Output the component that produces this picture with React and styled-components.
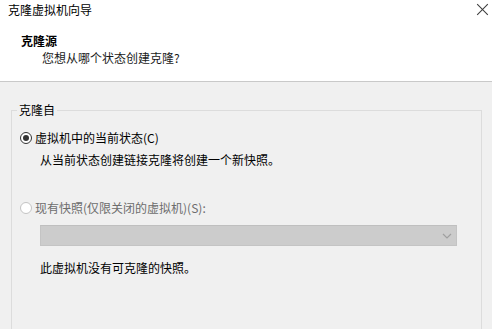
import React from "react";
import styled, { createGlobalStyle } from "styled-components";

const Global = createGlobalStyle`
  html, body { margin: 0; padding: 0; background: #f0f0f0; overflow: hidden; }
  body {
    font-family: "Microsoft YaHei UI", "Noto Sans CJK SC", "Noto Sans", sans-serif;
    font-size: 12px;
    color: #000;
  }
  * { box-sizing: border-box; }
`;

const Page = styled.div`
  width: 492px;
  height: 329px;
  overflow: hidden;
  display: flex;
  flex-direction: column;
`;

const Header = styled.div`
  flex: none;
  height: 82px;
  background: #fff;
  border-bottom: 1px solid #c9c9c9;
  display: flex;
  flex-direction: column;
`;

const TitleBar = styled.div`
  display: flex;
  align-items: flex-start;
  justify-content: space-between;
  padding: 2px 3px 0 8px;
  height: 18px;
`;

const TitleText = styled.div`
  line-height: 16px;
  color: #000;
`;

const CloseBtn = styled.span`
  display: block;
  width: 13px;
  height: 13px;
  margin-top: 1px;
  flex: none;
  position: relative;
  &::before, &::after {
    content: "";
    position: absolute;
    left: -1px;
    top: 6px;
    width: 15px;
    height: 1px;
    background: #3a3a3a;
  }
  &::before { transform: rotate(45deg); }
  &::after { transform: rotate(-45deg); }
`;

const HeadTitle = styled.div`
  margin: 15px 0 0 21px;
  line-height: 16px;
  font-weight: bold;
`;

const HeadSub = styled.div`
  margin: 1px 0 0 42px;
  line-height: 16px;
  color: #1a1a1a;
`;

const Body = styled.div`
  padding: 20px 0 0 11px;
  width: 482px;
`;

const Group = styled.fieldset`
  margin: 0;
  border: 1px solid #dcdcdc;
  padding: 0 0 40px 8px;
  min-inline-size: 0;
  height: 260px;
`;

const Legend = styled.legend`
  padding: 0 2px;
  margin-left: -3px;
  line-height: 16px;
`;

const Column = styled.div`
  display: flex;
  flex-direction: column;
`;

const RadioRow = styled.label`
  display: flex;
  align-items: center;
  gap: 3px;
  height: 16px;
  line-height: 16px;
  margin-top: ${(p) => p.$mt}px;
  color: ${(p) => (p.$disabled ? "#6d6d6d" : "#000")};
`;

const RadioCircle = styled.span`
  width: 12px;
  height: 12px;
  border-radius: 50%;
  border: 1px solid ${(p) => (p.$disabled ? "#c4c4c4" : "#333")};
  background: #fff;
  display: flex;
  align-items: center;
  justify-content: center;
  &::after {
    content: "";
    display: ${(p) => (p.$checked ? "block" : "none")};
    width: 6px;
    height: 6px;
    border-radius: 50%;
    background: #333;
  }
`;

const Note = styled.div`
  margin: ${(p) => p.$mt}px 0 0 20px;
  line-height: 16px;
`;

const Combo = styled.div`
  margin: 9px 0 0 20px;
  width: 417px;
  height: 21px;
  background: #cccccc;
  border: 1px solid #c4c4c4;
  border-top-color: #bfbfbf;
  display: flex;
  align-items: center;
  justify-content: flex-end;
  padding-right: 4px;
`;

export default function App() {
  return (
    <Page>
      <Global />
      <Header>
        <TitleBar>
          <TitleText>克隆虚拟机向导</TitleText>
          <CloseBtn aria-label="关闭" />
        </TitleBar>
        <HeadTitle>克隆源</HeadTitle>
        <HeadSub>您想从哪个状态创建克隆?</HeadSub>
      </Header>
      <Body>
        <Group>
          <Legend>克隆自</Legend>
          <Column>
            <RadioRow $mt={12}>
              <RadioCircle $checked />
              虚拟机中的当前状态(C)
            </RadioRow>
            <Note $mt={6}>从当前状态创建链接克隆将创建一个新快照。</Note>
            <RadioRow $mt={32} $disabled>
              <RadioCircle $disabled />
              现有快照(仅限关闭的虚拟机)(S):
            </RadioRow>
            <Combo>
              <svg width="10" height="6" viewBox="0 0 10 6">
                <path d="M1 1 L5 5 L9 1" stroke="#a0a0a0" strokeWidth="1.2" fill="none" />
              </svg>
            </Combo>
            <Note $mt={14}>此虚拟机没有可克隆的快照。</Note>
          </Column>
        </Group>
      </Body>
    </Page>
  );
}
